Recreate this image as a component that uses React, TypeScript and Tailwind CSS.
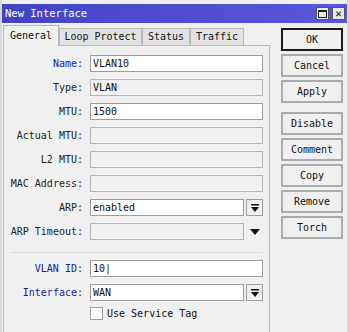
import React from "react";

const font = { fontFamily: '"DejaVu Sans Mono", "Liberation Mono", monospace' };

function DropIcon() {
  return (
    <svg width="8" height="8" viewBox="0 0 8 8">
      <rect x="0" y="0" width="8" height="1.5" fill="#111" />
      <polygon points="0,3 8,3 4,8" fill="#111" />
    </svg>
  );
}

function Field({
  label,
  value,
  blue,
  editable,
  drop,
  arrowOnly,
}: {
  label: string;
  value?: string;
  blue?: boolean;
  editable?: boolean;
  drop?: boolean;
  arrowOnly?: boolean;
}) {
  const box = editable ? "bg-white border-[#9c9c9c]" : "bg-[#f0f0f0] border-[#b4b4b4]";
  return (
    <div className="flex items-center h-[17px]">
      <div
        className={`w-[80px] text-right pr-[1px] ${blue ? "text-[#1b1b9c]" : "text-[#222]"}`}
      >
        {label}:
      </div>
      <div className="ml-[6px] flex items-center">
        <div
          className={`h-[17px] border ${box} flex items-center pl-[2px] ${
            drop || arrowOnly ? "w-[154px]" : "w-[173px]"
          }`}
        >
          {value}
        </div>
        {drop && (
          <div className="ml-[2px] w-[17px] h-[17px] border border-[#9c9c9c] bg-[#f0f0f0] flex items-center justify-center">
            <DropIcon />
          </div>
        )}
        {arrowOnly && (
          <div className="ml-[2px] w-[17px] h-[17px] flex items-center justify-center">
            <svg width="10" height="6" viewBox="0 0 10 6">
              <polygon points="0,0 10,0 5,6" fill="#111" />
            </svg>
          </div>
        )}
      </div>
    </div>
  );
}

function Btn({ children, primary }: { children: React.ReactNode; primary?: boolean }) {
  return (
    <div
      className={`h-[23px] w-[62px] flex items-center justify-center bg-[#f0f0f0] ${
        primary ? "border-2 border-[#1a1a1a]" : "border-2 border-[#ababab]"
      }`}
    >
      {children}
    </div>
  );
}

export default function App() {
  return (
    <div
      className="w-[349px] h-[332px] bg-[#f0f0f0] text-[10px] leading-none text-[#111] overflow-hidden border-l-2 border-r-2 border-[#d8d8d8] flex flex-col"
      style={font}
    >
      <div className="mt-[4px] h-[19px] bg-gradient-to-r from-[#4242c4] to-[#5858dc] flex items-center justify-between pl-[3px] pr-[2px]">
        <span className="text-white text-[10.5px]">New Interface</span>
        <div className="flex gap-[3px]">
          <div className="w-[13px] h-[13px] bg-[#e8e8e8] border border-[#555] flex items-center justify-center">
            <div className="w-[9px] h-[8px] border border-[#222] border-t-2" />
          </div>
          <div className="w-[13px] h-[13px] bg-[#e8e8e8] border border-[#555] flex items-center justify-center text-[#111] font-bold text-[11px]">
            ✕
          </div>
        </div>
      </div>

      <div className="flex flex-1">
        <div className="w-[267px] flex flex-col ml-[1px]">
          <div className="flex items-end h-[22px] mt-[1px]">
            <div className="h-[21px] w-[56px] border border-b-0 border-[#b8b8b8] bg-[#f0f0f0] flex items-center justify-center">
              General
            </div>
            <div className="h-[18px] w-[83px] border border-[#b8b8b8] bg-[#e2e2e2] flex items-center justify-center">
              Loop Protect
            </div>
            <div className="h-[18px] w-[48px] border border-[#b8b8b8] bg-[#e2e2e2] flex items-center justify-center">
              Status
            </div>
            <div className="h-[18px] w-[54px] border border-[#b8b8b8] bg-[#e2e2e2] flex items-center justify-center">
              Traffic
            </div>
            <div className="flex-1 border-b border-[#b8b8b8]" />
          </div>
          <div className="flex-1 border-r border-l border-[#b8b8b8] flex flex-col pt-[9px]">
            <div className="flex flex-col gap-[7px]">
              <Field label="Name" value="VLAN10" blue editable />
              <Field label="Type" value="VLAN" />
              <Field label="MTU" value="1500" editable />
              <Field label="Actual MTU" />
              <Field label="L2 MTU" />
              <Field label="MAC Address" />
              <Field label="ARP" value="enabled" editable drop />
              <Field label="ARP Timeout" arrowOnly />
            </div>
            <div className="mt-[12px] mb-[7px] mx-[6px] border-t border-[#dcdcdc]" />
            <div className="flex flex-col gap-[7px]">
              <Field label="VLAN ID" value="10|" blue editable />
              <Field label="Interface" value="WAN" blue editable drop />
              <div className="flex items-center h-[13px] -mt-[1px] pl-[86px]">
                <div className="w-[13px] h-[13px] bg-white border border-[#a0a0a0]" />
                <span className="ml-[4px]">Use Service Tag</span>
              </div>
            </div>
          </div>
        </div>

        <div className="flex flex-col ml-[11px] pt-[5px]">
          <div className="flex flex-col gap-[3px]">
            <Btn primary>OK</Btn>
            <Btn>Cancel</Btn>
            <Btn>Apply</Btn>
          </div>
          <div className="flex flex-col gap-[3px] mt-[9px]">
            <Btn>Disable</Btn>
            <Btn>Comment</Btn>
            <Btn>Copy</Btn>
            <Btn>Remove</Btn>
            <Btn>Torch</Btn>
          </div>
        </div>
      </div>
    </div>
  );
}
